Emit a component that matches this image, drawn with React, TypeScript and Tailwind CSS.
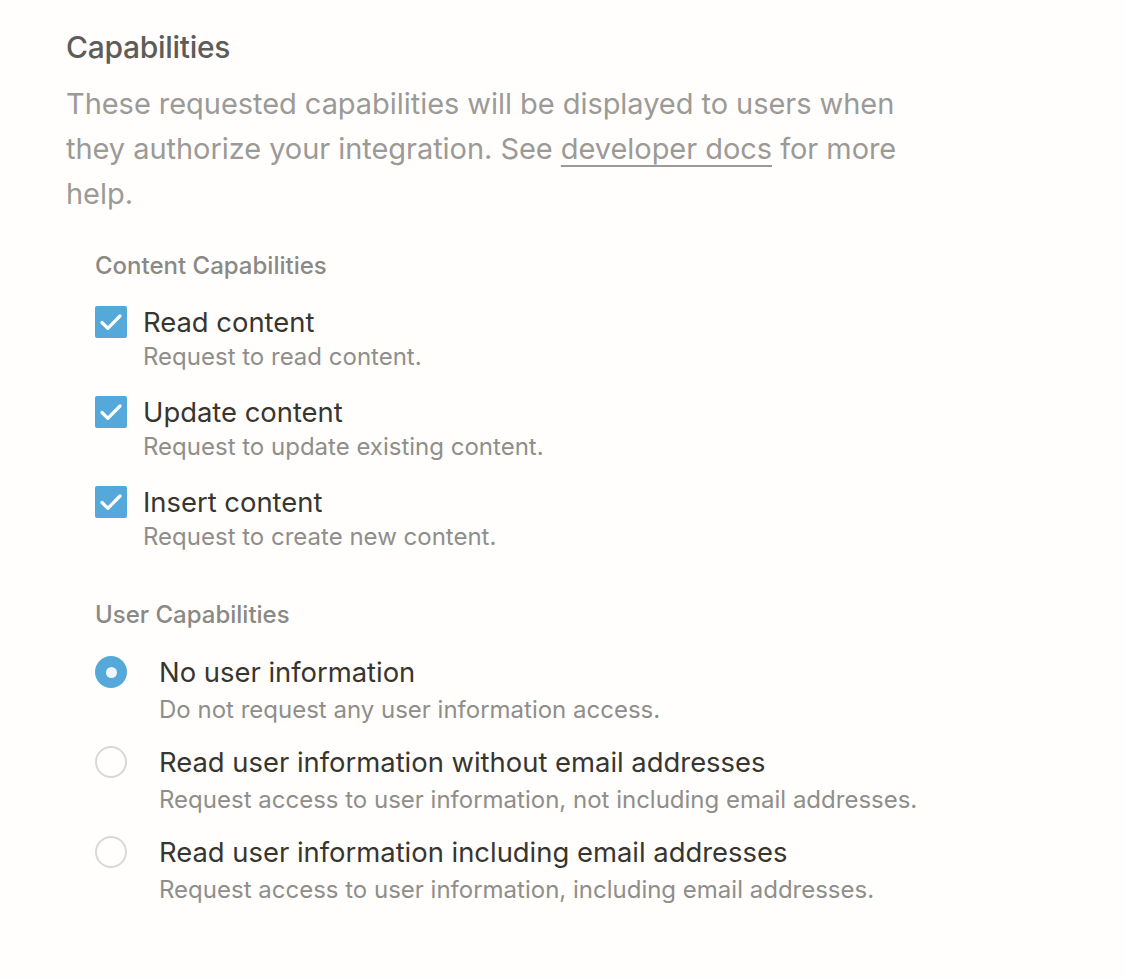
const contentCaps = [
  { title: "Read content", desc: "Request to read content." },
  { title: "Update content", desc: "Request to update existing content." },
  { title: "Insert content", desc: "Request to create new content." },
];

const userCaps = [
  { title: "No user information", desc: "Do not request any user information access.", checked: true },
  {
    title: "Read user information without email addresses",
    desc: "Request access to user information, not including email addresses.",
    checked: false,
  },
  {
    title: "Read user information including email addresses",
    desc: "Request access to user information, including email addresses.",
    checked: false,
  },
];

function Checkbox() {
  return (
    <div className="w-[32px] h-[32px] shrink-0 bg-[#55a9da] rounded-[2px]">
      <svg width="32" height="32" viewBox="0 0 32 32" fill="none">
        <path d="M7 16.5l5.8 5.8L25 10" stroke="white" strokeWidth="3.2" strokeLinecap="round" strokeLinejoin="round" />
      </svg>
    </div>
  );
}

function Radio({ checked }: { checked: boolean }) {
  return checked ? (
    <div className="w-[32px] h-[32px] shrink-0 rounded-full bg-[#55a9da] flex items-center justify-center">
      <div className="w-[11px] h-[11px] rounded-full bg-[#eef5fc]" />
    </div>
  ) : (
    <div className="w-[32px] h-[32px] shrink-0 rounded-full border-[2px] border-[#d9d8d5]" />
  );
}

export default function App() {
  return (
    <div className="min-h-[978px] bg-[#fffefc] font-['Inter',sans-serif] pt-[29px] pl-[66px]">
      <h2 className="text-[30px] leading-[36px] font-medium text-[#5d5c59] tracking-[-0.3px]">Capabilities</h2>
      <p className="mt-[16px] w-[860px] text-[29px] leading-[45px] text-[#9b9a97] tracking-[-0.05px]">
        These requested capabilities will be displayed to users when they authorize your integration. See{" "}
        <a className="underline underline-offset-[6px] decoration-[1.5px]">developer docs</a> for more help.
      </p>

      <div className="pl-[29px] mt-[35px]">
        <div className="text-[24px] leading-[30px] font-medium text-[#8a8986]">Content Capabilities</div>
        <div className="mt-[25px] flex flex-col gap-[24px]">
          {contentCaps.map((c) => (
            <div key={c.title} className="flex gap-[16px]">
              <Checkbox />
              <div>
                <div className="text-[27.4px] leading-[32px] text-[#37352f]">{c.title}</div>
                <div className="mt-[4px] text-[24px] leading-[30px] text-[#8f8e8b]">{c.desc}</div>
              </div>
            </div>
          ))}
        </div>

        <div className="mt-[48px] text-[24px] leading-[30px] font-medium text-[#8a8986]">User Capabilities</div>
        <div className="mt-[26px] flex flex-col gap-[21px]">
          {userCaps.map((c) => (
            <div key={c.title} className="flex gap-[32px]">
              <Radio checked={c.checked} />
              <div>
                <div className="text-[27.4px] leading-[32px] text-[#37352f]">{c.title}</div>
                <div className="mt-[7px] text-[24px] leading-[30px] text-[#8f8e8b]">{c.desc}</div>
              </div>
            </div>
          ))}
        </div>
      </div>
    </div>
  );
}
